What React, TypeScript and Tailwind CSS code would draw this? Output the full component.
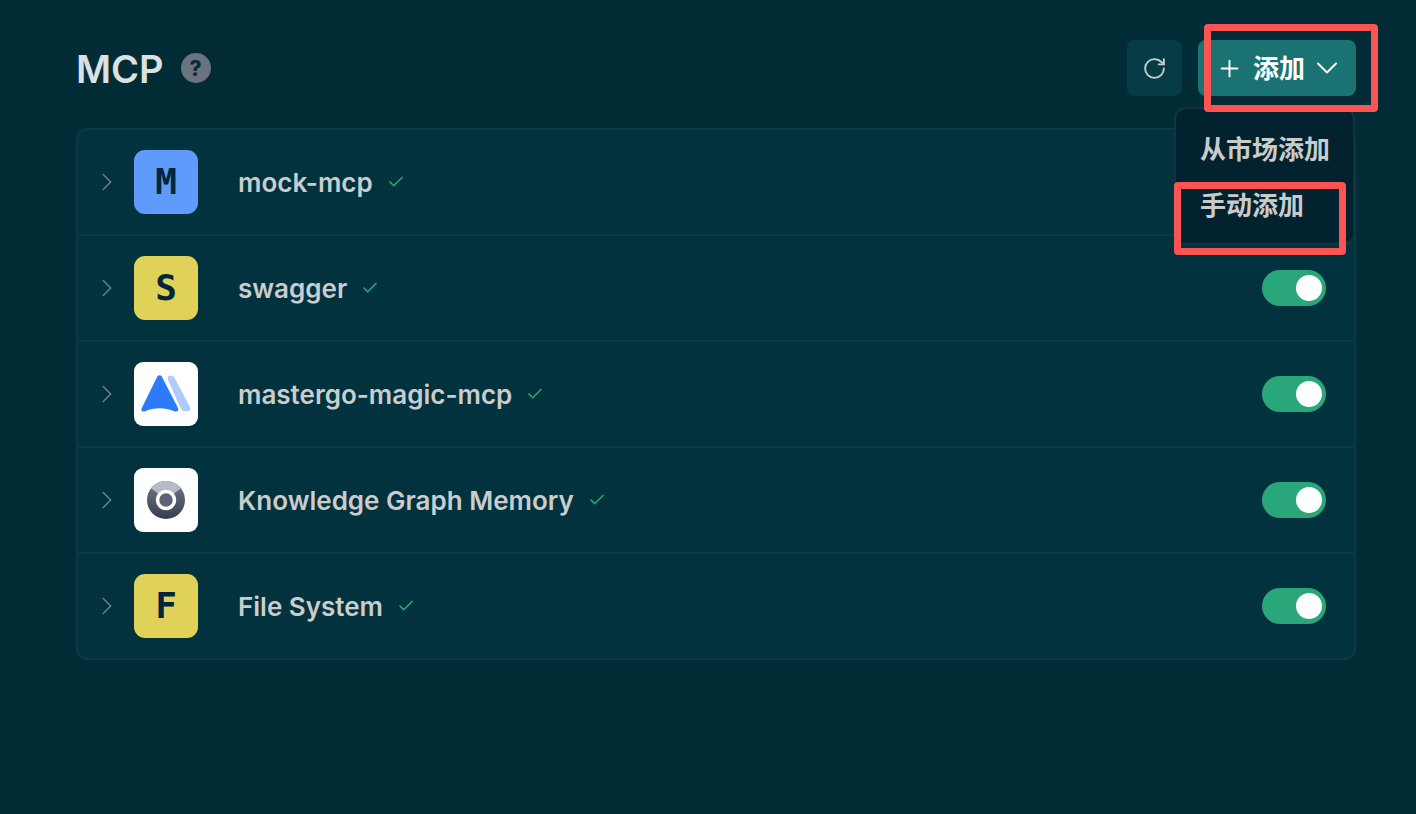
import React from "react";
import { ChevronDown, ChevronRight, Check, Plus, RotateCw } from "lucide-react";

type Server = { name: string; letter?: string; color?: string; logo?: "mastergo" | "memory" };

const servers: Server[] = [
  { name: "mock-mcp", letter: "M", color: "bg-[#5f9bfb]" },
  { name: "swagger", letter: "S", color: "bg-[#e0d159]" },
  { name: "mastergo-magic-mcp", logo: "mastergo" },
  { name: "Knowledge Graph Memory", logo: "memory" },
  { name: "File System", letter: "F", color: "bg-[#e0d159]" },
];

function MasterGoLogo() {
  return (
    <svg width="64" height="64" viewBox="0 0 64 64">
      <path d="M34 18c-1-2.500.5-4.500 2.500-4.500s3.400 1 4.400 3L56 45c1.200 2.500 0 4.200-2 4.200h-3c-2 0-3.300-1-4.300-3z" fill="#aecbfb" />
      <path d="M22.800 15.500c1.200-3 4.300-3 5.500 0L44 46c1.200 2.500-.8 4.200-3 3.400C35.500 47.500 30 46.300 25.500 46.300S15.500 47.500 10.500 49.400c-2.300.8-3.800-1-2.800-3.200z" fill="#2b7bfb" />
    </svg>
  );
}

function MemoryLogo() {
  return (
    <svg width="64" height="64" viewBox="0 0 64 64">
      <defs>
        <linearGradient id="memoryRing" x1="0" y1="0" x2="0" y2="1">
          <stop offset="0" stopColor="#737888" />
          <stop offset="1" stopColor="#383c50" />
        </linearGradient>
      </defs>
      <circle cx="32" cy="32" r="19" fill="url(#memoryRing)" />
      <path d="M32 32L17.100 20.200A19 19 0 0 1 46.900 20.200Z" fill="#b5bbc8" />
      <circle cx="32" cy="32" r="8.500" fill="#5c6278" stroke="#ffffff" strokeWidth="3.500" />
    </svg>
  );
}

function Toggle() {
  return (
    <div className="flex h-9 w-16 items-center justify-end rounded-full bg-[#29a67a] pr-1">
      <div className="h-[26px] w-[26px] rounded-full bg-white" />
    </div>
  );
}

function ServerRow({ server, last }: { server: Server; last: boolean }) {
  return (
    <div className={`flex items-center pl-[14px] pr-7 ${last ? "h-[104px]" : "h-[106px] border-b-2 border-[#0d3b45]"}`}>
      <ChevronRight size={30} strokeWidth={1.2} className="mr-[12px] shrink-0 text-[#6f8087]" />
      {server.logo ? (
        <div className="flex h-16 w-16 shrink-0 items-center justify-center rounded-[9px] bg-white">
          {server.logo === "mastergo" ? <MasterGoLogo /> : <MemoryLogo />}
        </div>
      ) : (
        <div className={`flex h-16 w-16 shrink-0 items-center justify-center rounded-[11px] font-['DejaVu_Sans_Mono',monospace] text-[36px] font-bold text-[#03263a] ${server.color}`}>
          {server.letter}
        </div>
      )}
      <span className="ml-10 text-[26px] font-semibold text-[#cbcdcd]">{server.name}</span>
      <Check size={18} strokeWidth={2.2} className="ml-[14px] text-[#29a67a]" />
      <div className="ml-auto">
        <Toggle />
      </div>
    </div>
  );
}

export default function App() {
  return (
    <div className="relative min-h-[814px] bg-[#012c36] pl-[76px] pr-[60px] pt-10 font-['Inter','Noto_Sans_CJK_SC',sans-serif]">
      <header className="flex h-14 items-center">
        <h1 className="pt-0.5 text-[38px] font-semibold leading-none text-[#dbe1e1]">MCP</h1>
        <span className="ml-[17px] flex h-[30px] w-[30px] items-center justify-center rounded-full bg-[#6b7280] text-[21px] font-extrabold leading-none text-[#0a2a36]">?</span>
        <div className="ml-auto flex gap-4">
          <button className="flex h-14 w-[55px] items-center justify-center rounded-lg bg-[#063c46] text-[#cbcdcd]">
            <RotateCw size={25} strokeWidth={1.8} />
          </button>
          <button className="flex h-14 w-[158px] items-center rounded-lg bg-[#1a7372] pl-[18px] text-[26px] font-bold text-white">
            <Plus size={27} strokeWidth={1.7} className="mr-[10px] shrink-0" />
            <span>添加</span>
            <ChevronDown size={36} strokeWidth={1.3} className="ml-1 shrink-0" />
          </button>
        </div>
      </header>

      <div className="mt-8 h-[532px] rounded-xl border-2 border-[#0d3b45] bg-[#01323d]">
        {servers.map((s, i) => (
          <ServerRow key={s.name} server={s} last={i === 4} />
        ))}
      </div>

      {/* dropdown menu */}
      <div className="absolute left-[1174px] top-[107px] h-[138px] w-[181px] rounded-xl border-2 border-[#13333c] bg-[#01222e] pl-6 pt-[23px] text-[26px] font-semibold leading-[36px] text-[#c9cbcb]">
        <div>从市场添加</div>
        <div className="mt-5">手动添加</div>
      </div>

      {/* red annotation boxes */}
      <div className="absolute left-[1204px] top-6 h-[88px] w-[174px] rounded-sm border-[7px] border-[#fc5353]" />
      <div className="absolute left-[1174px] top-[182px] h-[73px] w-[172px] rounded-sm border-[7px] border-[#fc5353]" />
    </div>
  );
}
